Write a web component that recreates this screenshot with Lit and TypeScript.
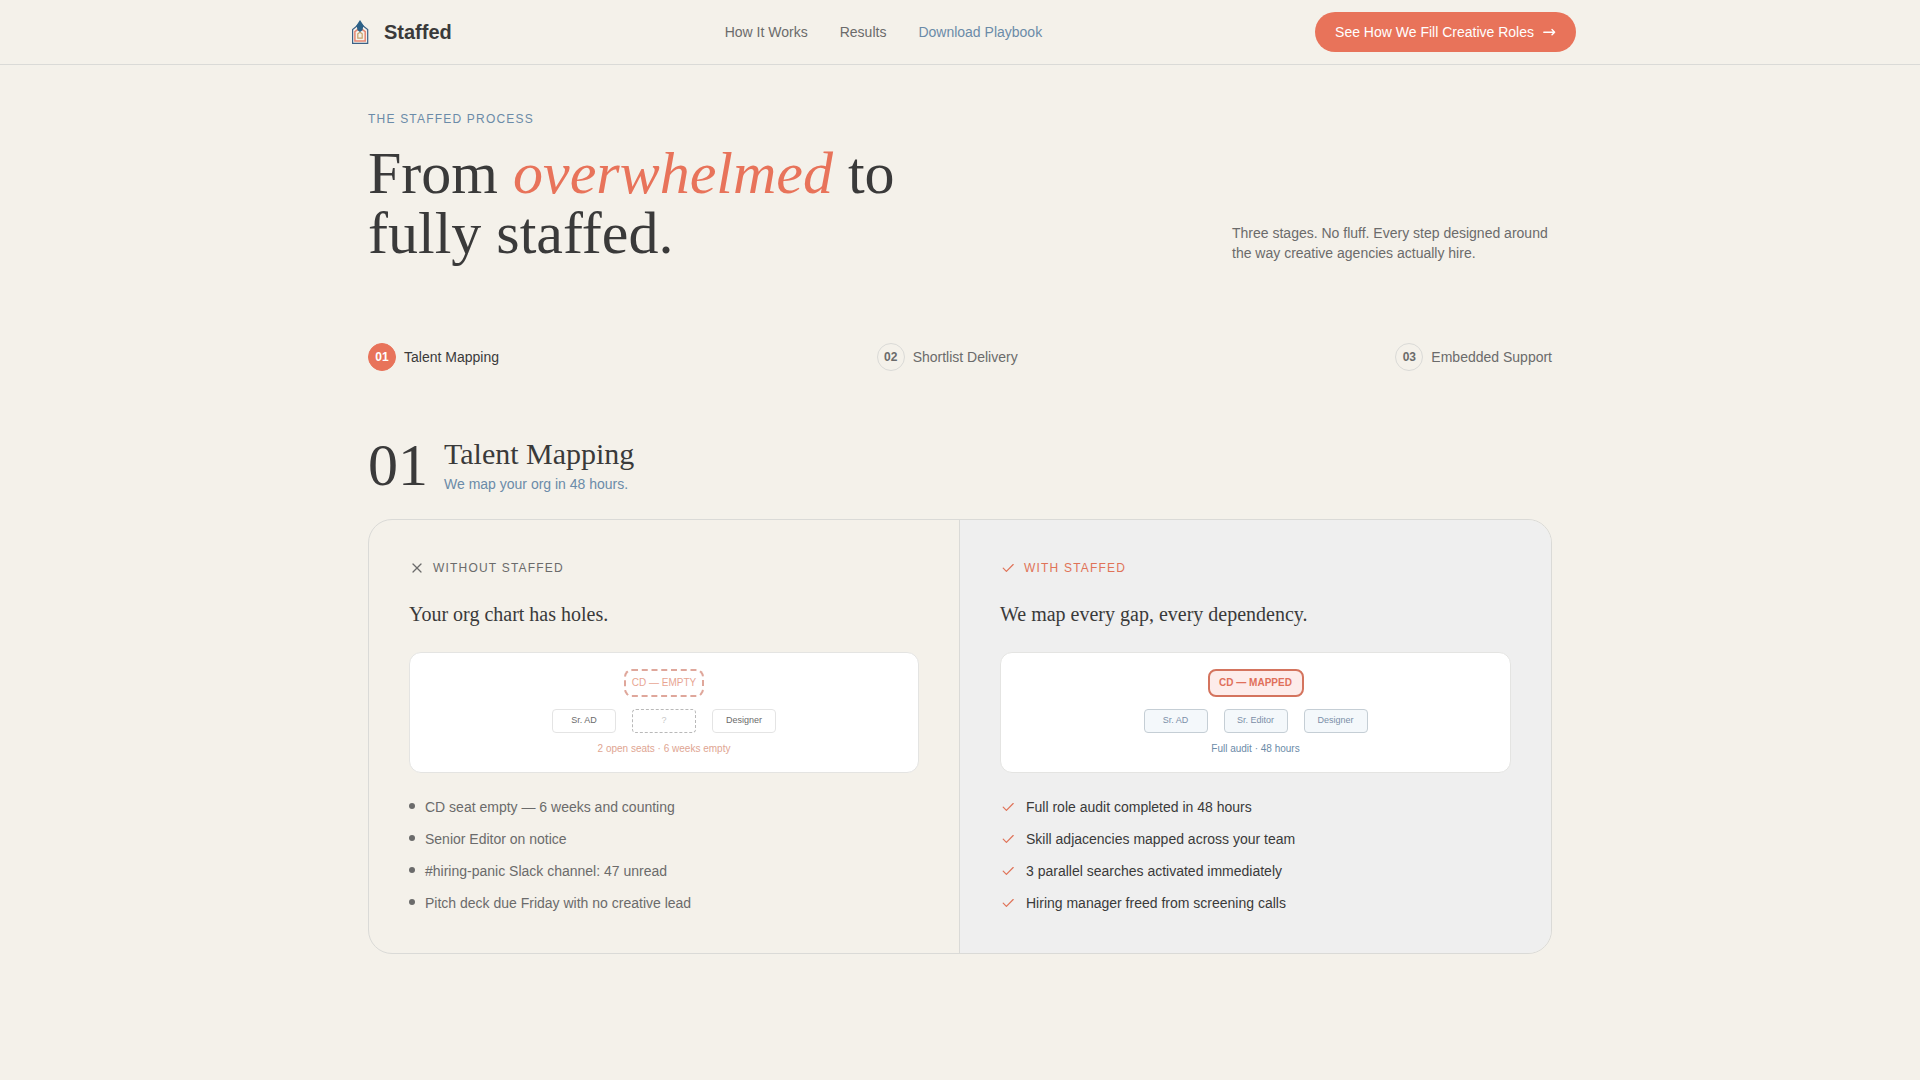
import { LitElement, html, css, svg, nothing } from "lit";
import { customElement, property } from "lit/decorators.js";
import { classMap } from "lit/directives/class-map.js";

type Seat = { label: string; vacant?: boolean };

type Side = {
  positive: boolean;
  tag: string;
  heading: string;
  lead: string;
  seats: Seat[];
  caption: string;
  points: string[];
};

const NAV = [
  { label: "How It Works", href: "#how", highlight: false },
  { label: "Results", href: "#results", highlight: false },
  { label: "Download Playbook", href: "#playbook", highlight: true },
];

const STEPS = [
  { number: "01", label: "Talent Mapping" },
  { number: "02", label: "Shortlist Delivery" },
  { number: "03", label: "Embedded Support" },
];

const WITHOUT: Side = {
  positive: false,
  tag: "Without Staffed",
  heading: "Your org chart has holes.",
  lead: "CD — EMPTY",
  seats: [{ label: "Sr. AD" }, { label: "?", vacant: true }, { label: "Designer" }],
  caption: "2 open seats · 6 weeks empty",
  points: [
    "CD seat empty — 6 weeks and counting",
    "Senior Editor on notice",
    "#hiring-panic Slack channel: 47 unread",
    "Pitch deck due Friday with no creative lead",
  ],
};

const WITH: Side = {
  positive: true,
  tag: "With Staffed",
  heading: "We map every gap, every dependency.",
  lead: "CD — MAPPED",
  seats: [{ label: "Sr. AD" }, { label: "Sr. Editor" }, { label: "Designer" }],
  caption: "Full audit · 48 hours",
  points: [
    "Full role audit completed in 48 hours",
    "Skill adjacencies mapped across your team",
    "3 parallel searches activated immediately",
    "Hiring manager freed from screening calls",
  ],
};

const ICONS = {
  check: svg`<path d="M4.8 12.2 9.6 17 19.8 6.8" />`,
  cross: svg`<path d="M18 6 6 18" /><path d="m6 6 12 12" />`,
};

const icon = (name: keyof typeof ICONS) => html`
  <svg
    class="icon"
    viewBox="0 0 24 24"
    fill="none"
    stroke="currentColor"
    stroke-width="1.8"
    stroke-linecap="round"
    stroke-linejoin="round"
    aria-hidden="true"
  >
    ${ICONS[name]}
  </svg>
`;

@customElement("site-header")
export class SiteHeader extends LitElement {
  static styles = css`
    :host {
      display: block;
      border-bottom: 1px solid #dadad7;
    }
    .bar {
      box-sizing: border-box;
      max-width: 1280px;
      min-height: 64px;
      margin: 0 auto;
      padding: 0 24px;
      display: flex;
      align-items: center;
      justify-content: space-between;
      gap: 24px;
    }
    a {
      text-decoration: none;
    }
    .brand {
      display: flex;
      align-items: center;
      gap: 8px;
      color: #3a3a3a;
      font-size: 20px;
      line-height: 28px;
      font-weight: 700;
    }
    .logo {
      width: 32px;
      height: 32px;
    }
    .nav {
      display: flex;
      gap: 32px;
      font-size: 14px;
      line-height: 20px;
    }
    .link {
      color: #6b6b6b;
    }
    .link.highlight {
      color: #6b8ba8;
    }
    .cta {
      display: flex;
      align-items: center;
      gap: 8px;
      height: 40px;
      padding: 0 20px;
      border: 0;
      border-radius: 20px;
      background: #e8735a;
      color: #fff;
      font: inherit;
      font-size: 14px;
      line-height: 20px;
      cursor: pointer;
    }
    .arrow {
      width: 14px;
      height: 14px;
    }
  `;

  render() {
    return html`
      <div class="bar">
        <a class="brand" href="#top">
          <svg class="logo" viewBox="0 0 32 32" fill="none" aria-hidden="true">
            <path d="M8.6 27.3V13.6L16 7.6l7.7 6v13.7z" fill="#f4f1ea" stroke="#3b6186" stroke-width="1.2" />
            <path d="M10.9 24.9v-9.2l5.1-3.9 5.2 3.9v9.2z" stroke="#e68672" stroke-width="1.5" />
            <path d="M13.8 22.1v-4.2l2.2-1.7 2.2 1.7v4.2z" fill="#f4f1ea" stroke="#c6a36c" stroke-width="1.2" />
            <path d="M16 3.9l4.3 6.7h-1.1l-.7 3.6-2.5 1.9-2.5-1.9-.7-3.6h-1.1z" fill="#2c6187" />
          </svg>
          <span>Staffed</span>
        </a>
        <nav class="nav" aria-label="Main">
          ${NAV.map(
            (item) => html`<a
              class=${classMap({ link: true, highlight: item.highlight })}
              href=${item.href}
              >${item.label}</a
            >`
          )}
        </nav>
        <button class="cta" type="button">
          <span>See How We Fill Creative Roles</span>
          <svg
            class="arrow"
            viewBox="0 0 14 14"
            fill="none"
            stroke="currentColor"
            stroke-width="1.4"
            stroke-linecap="round"
            stroke-linejoin="round"
            aria-hidden="true"
          >
            <path d="M1.8 7.2h10.8M10 4.6l2.6 2.6L10 9.8" />
          </svg>
        </button>
      </div>
    `;
  }
}

@customElement("comparison-side")
export class ComparisonSide extends LitElement {
  @property({ attribute: false }) side!: Side;

  static styles = css`
    :host {
      display: block;
    }
    .side {
      box-sizing: border-box;
      height: 100%;
      padding: 40px;
      display: flex;
      flex-direction: column;
      gap: 24px;
      color: #6b6b6b;
      border-right: 1px solid #dadad7;
    }
    .side.positive {
      background: #efefef;
      border-right: 0;
    }
    .icon {
      display: block;
      flex: none;
      width: 16px;
      height: 16px;
    }
    .tag {
      display: flex;
      align-items: center;
      gap: 8px;
      font-size: 12px;
      line-height: 16px;
      letter-spacing: 0.1em;
      text-transform: uppercase;
    }
    .positive .tag,
    .positive .point .icon {
      color: #e07358;
    }
    .heading {
      margin: 0;
      font-family: "Liberation Serif", serif;
      font-weight: 400;
      font-size: 20px;
      line-height: 28px;
      color: #3a3a3a;
    }
    .chart {
      padding: 16px;
      border: 1px solid #e4e4e2;
      border-radius: 12px;
      background: #fff;
      display: flex;
      flex-direction: column;
      align-items: center;
    }
    .lead,
    .seat {
      box-sizing: border-box;
      display: flex;
      align-items: center;
      justify-content: center;
      padding-bottom: 2px;
      white-space: nowrap;
    }
    .lead {
      width: 80px;
      height: 28px;
      border: 2px dashed #dfa79b;
      border-radius: 8px;
      font-size: 10px;
      line-height: 15px;
      color: #e8a592;
    }
    .positive .lead {
      width: 96px;
      border: 2px solid #d4745e;
      background: #fdecea;
      color: #e0705a;
      font-weight: 700;
    }
    .seats {
      margin: 12px 0 8px;
      display: flex;
      gap: 16px;
    }
    .seat {
      width: 64px;
      height: 24px;
      border: 1px solid #e4e4e4;
      border-radius: 4px;
      font-size: 9px;
      line-height: 14px;
    }
    .seat.vacant {
      border: 1px dashed #b9b9b9;
      color: #c8c8c8;
    }
    .positive .seat {
      border-color: #c5ced5;
      background: #f4f8fb;
      color: #7b8fa8;
    }
    .caption {
      font-size: 10px;
      line-height: 15px;
      color: #e0a592;
    }
    .positive .caption {
      color: #6b8ba8;
    }
    .points {
      margin: 0;
      padding: 0;
      list-style: none;
      display: flex;
      flex-direction: column;
      gap: 12px;
      font-size: 14px;
      line-height: 20px;
    }
    .positive .points {
      color: #3a3a3a;
    }
    .point {
      display: flex;
      gap: 10px;
    }
    .point .icon {
      margin-top: 2px;
    }
    .dot {
      flex: none;
      width: 6px;
      height: 6px;
      margin-top: 6px;
      border-radius: 50%;
      background: currentColor;
    }
  `;

  render() {
    const { positive, tag, heading, lead, seats, caption, points } = this.side;
    return html`
      <div class=${classMap({ side: true, positive })}>
        <div class="tag">${icon(positive ? "check" : "cross")}<span>${tag}</span></div>
        <h3 class="heading">${heading}</h3>
        <div class="chart">
          <div class="lead">${lead}</div>
          <div class="seats">
            ${seats.map(
              (seat) =>
                html`<div class=${classMap({ seat: true, vacant: !!seat.vacant })}>${seat.label}</div>`
            )}
          </div>
          <div class="caption">${caption}</div>
        </div>
        <ul class="points">
          ${points.map(
            (point) => html`<li class="point">
              ${positive ? icon("check") : html`<span class="dot"></span>`}
              <span>${point}</span>
            </li>`
          )}
        </ul>
      </div>
    `;
  }
}

@customElement("app-root")
export class AppRoot extends LitElement {
  static styles = css`
    :host {
      display: block;
      min-height: 100vh;
      background: #f4f1ea;
      color: #3a3a3a;
      font-family: "Liberation Sans", Arial, sans-serif;
    }
    .page {
      box-sizing: border-box;
      max-width: 1280px;
      margin: 0 auto;
      padding: 46px 48px;
    }
    .eyebrow {
      margin: 0 0 16px;
      font-size: 12px;
      line-height: 16px;
      letter-spacing: 0.1em;
      text-transform: uppercase;
      color: #6b8ba8;
    }
    .hero {
      display: flex;
      align-items: flex-end;
      justify-content: space-between;
      gap: 32px;
    }
    .title {
      max-width: 576px;
      margin: 0;
      font-family: "Liberation Serif", serif;
      font-weight: 400;
      font-size: 60px;
      line-height: 60px;
    }
    .accent {
      color: #e8735a;
    }
    .intro {
      flex: 0 1 320px;
      margin: 0;
      font-size: 14px;
      line-height: 20px;
      color: #6b6b6b;
    }
    .steps {
      margin: 80px 0 64px;
      display: flex;
      justify-content: space-between;
      gap: 24px;
    }
    .step {
      display: flex;
      align-items: center;
      gap: 8px;
      padding: 0;
      border: 0;
      background: none;
      font: inherit;
      font-size: 14px;
      line-height: 20px;
      color: #6b6b6b;
      cursor: pointer;
    }
    .badge {
      box-sizing: border-box;
      width: 28px;
      height: 28px;
      display: flex;
      align-items: center;
      justify-content: center;
      border: 1px solid #dadad7;
      border-radius: 50%;
      font-size: 12px;
      line-height: 16px;
      font-weight: 700;
    }
    .step.active {
      color: #3a3a3a;
    }
    .active .badge {
      border-color: #e8735a;
      background: #e8735a;
      color: #fff;
    }
    .stage {
      display: flex;
      align-items: center;
      gap: 16px;
      margin-bottom: 24px;
    }
    .number {
      font-family: "Liberation Serif", serif;
      font-size: 60px;
      line-height: 60px;
    }
    .names {
      display: flex;
      flex-direction: column;
      gap: 2px;
    }
    .name {
      margin: 0;
      font-family: "Liberation Serif", serif;
      font-weight: 400;
      font-size: 30px;
      line-height: 36px;
    }
    .promise {
      margin: 0;
      font-size: 14px;
      line-height: 20px;
      color: #6b8ba8;
    }
    .comparison {
      display: grid;
      grid-template-columns: 1fr 1fr;
      border: 1px solid #dadad7;
      border-radius: 24px;
      overflow: hidden;
    }
  `;

  render() {
    return html`
      <site-header></site-header>
      <main class="page">
        <p class="eyebrow">The Staffed Process</p>
        <div class="hero">
          <h1 class="title">From <em class="accent">overwhelmed</em> to fully staffed.</h1>
          <p class="intro">
            Three stages. No fluff. Every step designed around the way creative agencies actually
            hire.
          </p>
        </div>
        <div class="steps">
          ${STEPS.map(
            (step, index) => html`<button
              type="button"
              class=${classMap({ step: true, active: index === 0 })}
              aria-current=${index === 0 ? "step" : nothing}
            >
              <span class="badge">${step.number}</span>
              <span>${step.label}</span>
            </button>`
          )}
        </div>
        <section>
          <div class="stage">
            <div class="number">01</div>
            <div class="names">
              <h2 class="name">Talent Mapping</h2>
              <p class="promise">We map your org in 48 hours.</p>
            </div>
          </div>
          <div class="comparison">
            <comparison-side .side=${WITHOUT}></comparison-side>
            <comparison-side .side=${WITH}></comparison-side>
          </div>
        </section>
      </main>
    `;
  }
}
